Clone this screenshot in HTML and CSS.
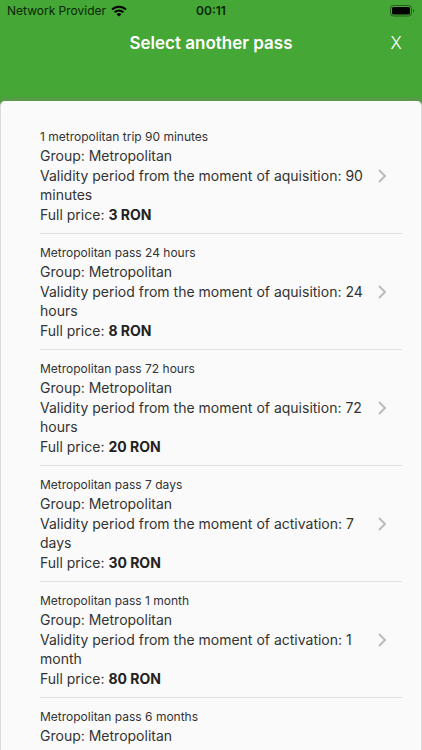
FILE: index.html
```html
<!DOCTYPE html>
<html lang="en">
<head>
<meta charset="utf-8">
<meta name="viewport" content="width=device-width, initial-scale=1">
<title>Select another pass</title>
<link rel="stylesheet" href="styles.css">
</head>
<body>
<div class="status">
  <div class="carrier"><span>Network Provider</span>
    <svg width="16" height="12" viewBox="0 0 16 12" aria-hidden="true"><g fill="none" stroke="#000" stroke-width="2"><path d="M1 4.600a10 10 0 0 1 14 0"/><path d="M3.600 7.300a6.300 6.300 0 0 1 8.800 0"/></g><path d="M8 11.600 5.600 9.200a3.400 3.400 0 0 1 4.800 0z"/></svg>
  </div>
  <time class="clock">00:11</time>
  <div class="battery">
    <svg width="25" height="12" viewBox="0 0 25 12" aria-hidden="true"><rect x=".5" y=".5" width="21" height="10.500" rx="3" fill="none" stroke="#000" stroke-opacity=".45"/><rect x="2" y="2" width="18" height="7.500" rx="1.500"/><path d="M23 4v3.600c1.500-.5 1.500-3.100 0-3.600z" fill-opacity=".5"/></svg>
  </div>
</div>
<header class="bar">
  <h1>Select another pass</h1>
  <button class="close" type="button" aria-label="Close">X</button>
</header>
<main class="sheet">
  <ul class="passes">
    <li><a class="pass" href="#p1"><div class="info"><h2>1 metropolitan trip 90 minutes</h2><p>Group: Metropolitan</p><p>Validity period from the moment of aquisition: 90 minutes</p><p>Full price: <b>3 RON</b></p></div><svg class="chevron" viewBox="0 0 8 14" aria-hidden="true"><path d="M1 1l6 6-6 6"/></svg></a></li>
    <li><a class="pass" href="#p2"><div class="info"><h2>Metropolitan pass 24 hours</h2><p>Group: Metropolitan</p><p>Validity period from the moment of aquisition: 24 hours</p><p>Full price: <b>8 RON</b></p></div><svg class="chevron" viewBox="0 0 8 14" aria-hidden="true"><path d="M1 1l6 6-6 6"/></svg></a></li>
    <li><a class="pass" href="#p3"><div class="info"><h2>Metropolitan pass 72 hours</h2><p>Group: Metropolitan</p><p>Validity period from the moment of aquisition: 72 hours</p><p>Full price: <b>20 RON</b></p></div><svg class="chevron" viewBox="0 0 8 14" aria-hidden="true"><path d="M1 1l6 6-6 6"/></svg></a></li>
    <li><a class="pass" href="#p4"><div class="info"><h2>Metropolitan pass 7 days</h2><p>Group: Metropolitan</p><p>Validity period from the moment of activation: 7 days</p><p>Full price: <b>30 RON</b></p></div><svg class="chevron" viewBox="0 0 8 14" aria-hidden="true"><path d="M1 1l6 6-6 6"/></svg></a></li>
    <li><a class="pass" href="#p5"><div class="info"><h2>Metropolitan pass 1 month</h2><p>Group: Metropolitan</p><p>Validity period from the moment of activation: 1 month</p><p>Full price: <b>80 RON</b></p></div><svg class="chevron" viewBox="0 0 8 14" aria-hidden="true"><path d="M1 1l6 6-6 6"/></svg></a></li>
    <li><a class="pass" href="#p6"><div class="info"><h2>Metropolitan pass 6 months</h2><p>Group: Metropolitan</p></div></a></li>
  </ul>
</main>
</body>
</html>
```
FILE: styles.css
```css
* { box-sizing: border-box; }
body {
  margin: 0;
  min-height: 100vh;
  display: flex;
  flex-direction: column;
  background: #45a735;
  color: #333;
  font-family: Inter, "Liberation Sans", sans-serif;
}
h1, h2, p, ul { margin: 0; padding: 0; }
.status {
  display: grid;
  grid-template-columns: 1fr auto 1fr;
  align-items: center;
  height: 21px;
  padding: 0 7px;
  color: #0a2606;
  font-size: 12px;
}
.carrier { display: flex; align-items: center; gap: 5px; white-space: nowrap; }
.clock { font-weight: 600; }
.battery { display: flex; justify-content: flex-end; }
.bar {
  display: grid;
  grid-template-columns: 40px 1fr 40px;
  align-items: center;
  height: 43px;
  padding: 0 6px;
  margin-bottom: 37px;
  color: #fff;
}
.bar h1 { grid-column: 2; text-align: center; font-size: 17px; font-weight: 600; }
.close {
  border: 0;
  padding: 0;
  background: none;
  color: inherit;
  font: 300 17px Inter, sans-serif;
}
.sheet {
  flex: 1;
  padding: 17px 19px 0 39px;
  border: solid #dcdcdc;
  border-width: 0 1px;
  border-radius: 5px 5px 0 0;
  background: #fafafa;
  box-shadow: 0 -1px 3px 2px #6b8f6099;
}
.passes { list-style: none; }
.pass {
  display: flex;
  align-items: center;
  justify-content: space-between;
  padding: 10px 16px 9px 0;
  border-bottom: 1px solid #e2e2e5;
  color: inherit;
  text-decoration: none;
}
.info { width: 324px; }
.info h2 { font-size: 12px; font-weight: 400; line-height: 18px; }
.info p { font-size: 14px; line-height: 19px; }
.info p + p { margin-top: 1px; }
.info b { font-weight: 700; color: #222; }
.chevron {
  width: 8px;
  height: 14px;
  fill: none;
  stroke: #bcbcbf;
  stroke-width: 2;
}
li:last-child .pass { border-bottom: 0; padding-bottom: 0; }
```
